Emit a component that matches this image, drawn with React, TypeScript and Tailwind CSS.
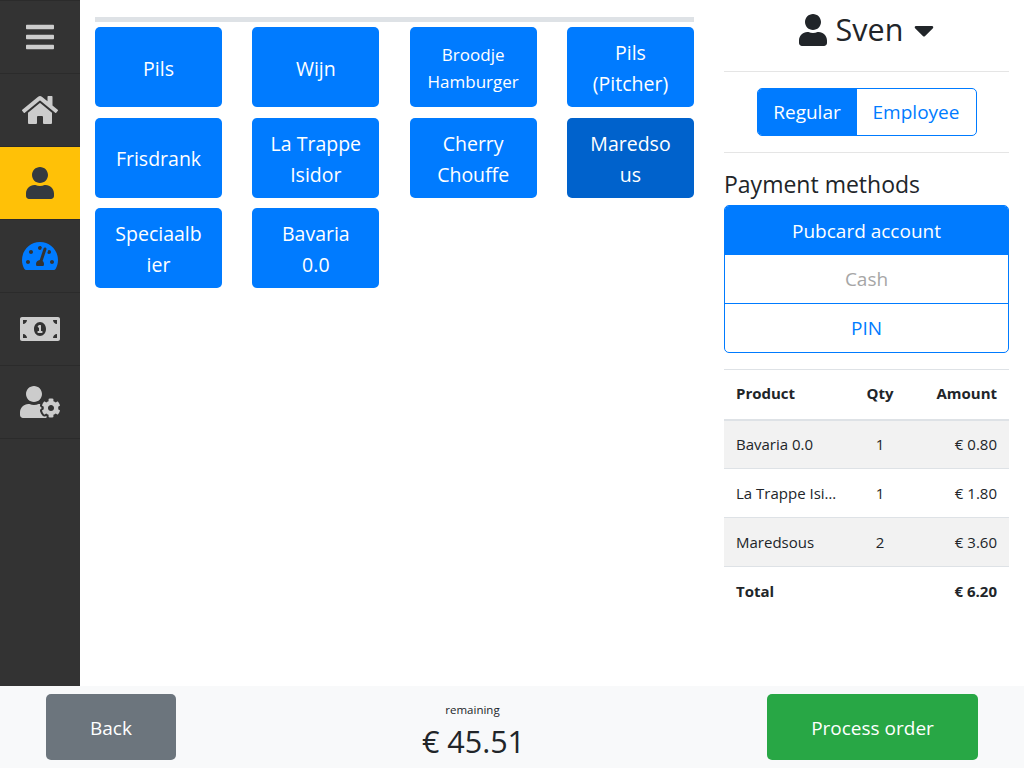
import React from 'react';
import { FaBars, FaCaretDown, FaHome, FaMoneyBillAlt, FaTachometerAlt, FaUser, FaUserCog } from 'react-icons/fa';

const products = [
  { name: 'Pils', padding: 'px-[20px]', small: false, active: false },
  { name: 'Wijn', padding: 'px-[20px]', small: false, active: false },
  { name: 'Broodje Hamburger', padding: 'px-[16px]', small: true, active: false },
  { name: 'Pils (Pitcher)', padding: 'px-[20px]', small: false, active: false },
  { name: 'Frisdrank', padding: 'px-[20px]', small: false, active: false },
  { name: 'La Trappe Isidor', padding: 'px-[17px]', small: false, active: false },
  { name: 'Cherry Chouffe', padding: 'px-[20px]', small: false, active: false },
  { name: 'Maredsous', padding: 'px-[20px]', small: false, active: true },
  { name: 'Speciaalbier', padding: 'px-[20px]', small: false, active: false },
  { name: 'Bavaria 0.0', padding: 'px-[20px]', small: false, active: false },
];

const lines = [
  { name: 'Bavaria 0.0', qty: 1, amount: '€ 0.80' },
  { name: 'La Trappe Isidor', qty: 1, amount: '€ 1.80' },
  { name: 'Maredsous', qty: 2, amount: '€ 3.60' },
];

const Sidebar: React.FC = () => (
  <nav className="w-20 shrink-0 border-t border-[#2b2b2b] bg-[#333333] text-[#cccccc]">
    <div className="flex h-[73px] items-center justify-center border-b border-[#2b2b2b] text-[32px]"><FaBars /></div>
    <div className="flex h-[73px] items-center justify-center border-b border-[#2b2b2b] text-[36px]"><FaHome /></div>
    <div className="flex h-[73px] items-center justify-center border-b border-[#2b2b2b] bg-[#ffc107] text-[32px] text-[#343a40]"><FaUser /></div>
    <div className="flex h-[73px] items-center justify-center border-b border-[#2b2b2b] text-[36px] text-[#007bff]"><FaTachometerAlt /></div>
    <div className="flex h-[73px] items-center justify-center border-b border-[#2b2b2b] text-[40px]"><FaMoneyBillAlt /></div>
    <div className="flex h-[73px] items-center justify-center border-b border-[#2b2b2b] text-[40px]"><FaUserCog /></div>
  </nav>
);

const App: React.FC = () => {
  return (
    <div className="flex h-screen flex-col overflow-hidden bg-white font-['Open_Sans',sans-serif] text-[#212529]">
      <div className="flex min-h-0 flex-1">
        <Sidebar />
        <main className="w-[614px] shrink-0 pl-[15px] pt-[17px]">
          <div className="mb-[5px] h-[5px] w-[599px] bg-[#dee2e6]" />
          <div className="grid w-[599px] grid-cols-4 gap-x-[30.33px] gap-y-[10.5px]">
            {products.map((p) => (
              <button
                key={p.name}
                className={`flex h-20 items-center justify-center rounded-[5px] pt-[2px] text-center text-white [overflow-wrap:anywhere] ${p.padding} ${p.small ? 'text-[17px] leading-[27px]' : 'text-[19.5px] leading-[31px]'} ${p.active ? 'bg-[#0062cc]' : 'bg-[#007bff]'}`}
              >
                {p.name}
              </button>
            ))}
          </div>
        </main>
        <aside className="w-[285px] shrink-0 pl-[30px] box-content">
          <div className="flex h-[72px] items-center justify-center gap-[9px] border-b border-[#e5e5e5] pb-[11px] text-[30.5px]">
            <FaUser className="h-8 w-7" />
            <span>Sven</span>
            <FaCaretDown className="ml-[2px] h-8 w-5" />
          </div>
          <div className="flex h-[81px] items-center justify-center border-b border-[#e5e5e5]">
            <div className="flex h-12 w-[220px] overflow-hidden rounded-[5px] border border-[#007bff] text-[19px]">
              <div className="flex w-[99px] items-center justify-center bg-[#007bff] pt-px text-white">Regular</div>
              <div className="flex flex-1 items-center justify-center pt-px text-[#007bff]">Employee</div>
            </div>
          </div>
          <h2 className="mt-[15px] h-[37px] text-[23px] leading-[33px] font-medium">Payment methods</h2>
          <div className="overflow-hidden rounded-[5px] border border-[#007bff] text-center text-[19px]">
            <div className="flex h-[49px] items-center justify-center bg-[#007bff] pt-px text-white">Pubcard account</div>
            <div className="flex h-[49px] items-center justify-center border-b border-[#007bff] pt-px text-[#a6a6a6]">Cash</div>
            <div className="flex h-[48px] items-center justify-center pt-px text-[#007bff]">PIN</div>
          </div>
          <table className="mt-4 w-full table-fixed border-t border-[#dee2e6] text-[15px]">
            <thead>
              <tr className="h-[50px] border-b-2 border-[#dee2e6] font-bold">
                <th className="w-[126px] pb-[2px] pl-3 text-left">Product</th>
                <th className="w-[60px] pb-[2px] text-center">Qty</th>
                <th className="pb-[2px] pr-3 text-right">Amount</th>
              </tr>
            </thead>
            <tbody>
              {lines.map((l, i) => (
                <tr key={l.name} className={`h-[49px] border-b border-[#dee2e6] ${i % 2 === 0 ? 'bg-[#f2f2f2]' : ''}`}>
                  <td className="pl-3"><div className="w-[102px] truncate">{l.name}</div></td>
                  <td className="text-center">{l.qty}</td>
                  <td className="pr-3 text-right">{l.amount}</td>
                </tr>
              ))}
              <tr className="h-[49px] font-bold">
                <td className="pl-3">Total</td>
                <td />
                <td className="pr-3 text-right">€ 6.20</td>
              </tr>
            </tbody>
          </table>
        </aside>
      </div>
      <footer className="flex h-[82px] shrink-0 items-center bg-[#f8f9fa] pl-[46px]">
        <button className="h-[66px] w-[130px] rounded-[5px] bg-[#6c757d] pt-[2px] text-[19px] text-white">Back</button>
        <div className="ml-[177px] w-[241px] pt-[9px] text-center">
          <div className="-ml-[2px] text-[11.5px] leading-[18px]">remaining</div>
          <div className="text-[30.5px] leading-[44px] font-medium">€ 45.51</div>
        </div>
        <button className="ml-[173px] h-[66px] w-[211px] rounded-[5px] bg-[#28a745] pt-[2px] text-[19px] text-white">Process order</button>
      </footer>
    </div>
  );
};

export default App;
